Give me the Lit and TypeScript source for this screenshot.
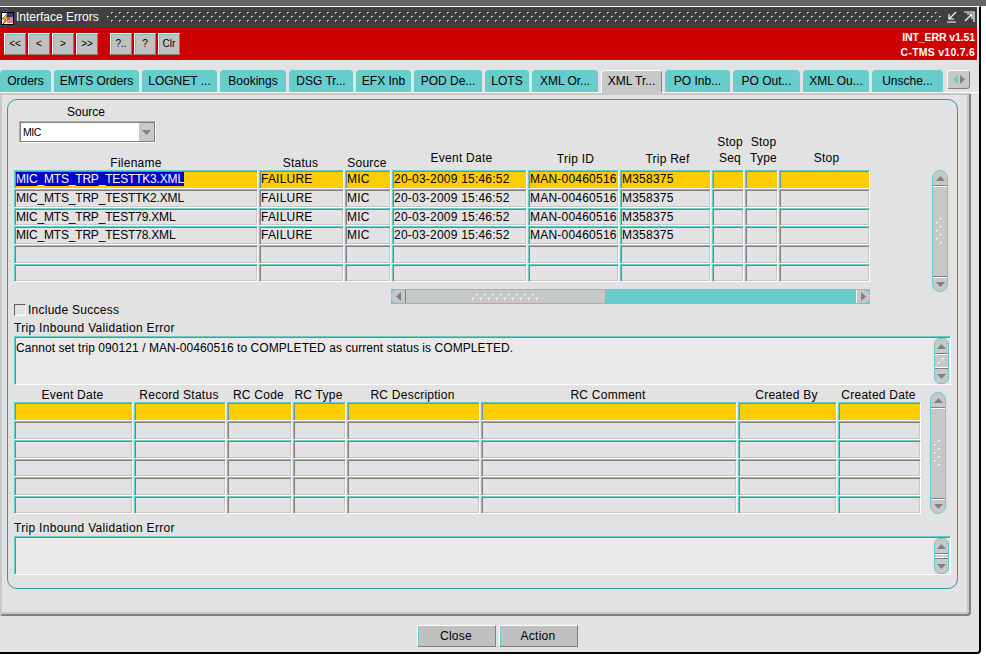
import { LitElement, html, css, svg } from "lit";
import { customElement } from "lit/decorators.js";

const dots = (id: string, w: number, h: number) => html`<svg class="dots" width=${w} height=${h}>
  <defs><pattern id=${id} width="8" height="8" patternUnits="userSpaceOnUse">
    ${svg`<rect x="4" y="1" width="1" height="1" fill="#ffffff"/><rect x="5" y="1" width="1" height="1" fill="#ffffff"/><rect x="4" y="2" width="1" height="1" fill="#ffffff"/><rect x="5" y="2" width="1" height="1" fill="#66cccc"/>
    <rect x="0" y="5" width="1" height="1" fill="#ffffff"/><rect x="1" y="5" width="1" height="1" fill="#ffffff"/><rect x="0" y="6" width="1" height="1" fill="#ffffff"/><rect x="1" y="6" width="1" height="1" fill="#66cccc"/>`}
  </pattern></defs>
  <rect width="100%" height="100%" fill="url(#${id})"/></svg>`;

const titleDots = html`<svg class="dots" width="840" height="12">
  <defs><pattern id="tp" width="8" height="8" patternUnits="userSpaceOnUse">
    ${svg`<rect x="4" y="1" width="2" height="1" fill="#cccccc"/><rect x="4" y="2" width="1" height="1" fill="#66cccc"/><rect x="5" y="2" width="1" height="1" fill="#000"/>
    <rect x="0" y="5" width="2" height="1" fill="#cccccc"/><rect x="0" y="6" width="1" height="1" fill="#66cccc"/><rect x="1" y="6" width="1" height="1" fill="#000"/>`}
  </pattern></defs>
  <rect width="100%" height="100%" fill="url(#tp)"/></svg>`;

const up = html`<svg width="9" height="5" viewBox="0 0 9 5"><path d="M4.5 0 L9 5 L0 5Z" fill="#808080"/></svg>`;
const down = html`<svg width="9" height="5" viewBox="0 0 9 5"><path d="M0 0 L9 0 L4.5 5Z" fill="#808080"/></svg>`;
const left = html`<svg width="5" height="9" viewBox="0 0 5 9"><path d="M5 0 L5 9 L0 4.5Z" fill="#808080"/></svg>`;
const leftT = html`<svg width="5" height="9" viewBox="0 0 5 9"><path d="M5 0 L5 9 L0 4.5Z" fill="#66cccc"/></svg>`;
const right = html`<svg width="5" height="9" viewBox="0 0 5 9"><path d="M0 0 L5 4.5 L0 9Z" fill="#808080"/></svg>`;

const tabs: [string, number][] = [["Orders",51],["EMTS Orders",85],["LOGNET ...",75],["Bookings",66],["DSG Tr...",64],["EFX Inb",55],["POD De...",68],["LOTS",44],["XML Or...",66],["XML Tr...",61],["PO Inb...",65],["PO Out...",67],["XML Ou...",66],["Unsche...",71]];

const upperCols = [244,85,46,135,91,91,32,33,91];
const upperHead: [string, string][] = [["Filename","h1"],["Status","h1 hm"],["Source","h1 hm"],["Event Date","h2 hp"],["Trip ID","h3 hp"],["Trip Ref","h3 hp"],["Stop<br>Seq","h2 hp"],["Stop<br>Type","h2 hp"],["Stop","h2 hp"]];
const f = "FAILURE", m = "MIC", d = "20-03-2009 15:46:52", t = "MAN-00460516", r = "M358375";
const upperRows = [
  ["MIC_MTS_TRP_TESTTK3.XML",f,m,d,t,r,"","",""],
  ["MIC_MTS_TRP_TESTTK2.XML",f,m,d,t,r,"","",""],
  ["MIC_MTS_TRP_TEST79.XML",f,m,d,t,r,"","",""],
  ["MIC_MTS_TRP_TEST78.XML",f,m,d,t,r,"","",""],
  ["","","","","","","","",""],
  ["","","","","","","","",""],
];
const lowerCols = [119,92,65,53,133,256,99,83];
const lowerHead = ["Event Date","Record Status","RC Code","RC Type","RC Description","RC Comment","Created By","Created Date"];

@customElement("app-root")
export class AppRoot extends LitElement {
  static styles = css`
    :host { display: block; width: 986px; height: 658px; background: #fff; font-family: "Liberation Sans", Arial, sans-serif; font-size: 12px; color: #000; overflow: hidden; letter-spacing: 0.25px; }
    * { box-sizing: border-box; }
    .topband { height: 6px; width: 986px; background: #666666; }
    .win { width: 981px; height: 648px; background: #e2e2e2; border-top: 1px solid #fff; border-right: 2px solid #000; border-bottom: 2px solid #000; border-bottom-right-radius: 4px; display: flex; flex-direction: column; }
    .title { height: 20px; margin-right: 2px; background: #404040; display: flex; align-items: center; color: #fff; flex: none; }
    .appicon { width: 15px; height: 18px; margin-left: 0; flex: none; }
    .title .t { margin-left: 1px; white-space: nowrap; font-size: 12px; letter-spacing: 0; }
    .dotwrap { flex: 1; margin: 0 6px 0 8px; height: 12px; overflow: hidden; }
    .dots { display: block; }
    .winbtn { width: 11px; height: 12px; margin-right: 6px; flex: none; display: block; }
    .winbtn.last { margin-right: 2px; }
    .red { height: 33px; margin-right: 2px; background: #cc0000; display: flex; align-items: flex-start; flex: none; padding-top: 6px; padding-left: 4px; }
    .tb { width: 22px; height: 22px; background: #c0c0c0; border: 1px solid; border-color: #fff #808080 #808080 #fff; box-shadow: 1px 1px 0 #66cccc inset; margin-right: 2px; font-size: 10px; display: flex; align-items: center; justify-content: center; padding: 0 0 2px; letter-spacing: 0; }
    .tb.gap { margin-left: 10px; }
    .ver { margin-left: auto; margin-top: -3px; margin-right: 2px; color: #fff; font-weight: bold; font-size: 10.5px; text-align: right; line-height: 15px; letter-spacing: -0.1px; }
    .ver .l2 { letter-spacing: 0.25px; }
    .strip { height: 33px; flex: none; display: flex; align-items: flex-end; border-bottom: 1px solid #fff; }
    .tab { height: 22px; background: #66cccc; margin-right: 3px; flex: none; display: flex; align-items: center; justify-content: center; border-radius: 4px 4px 0 0; white-space: nowrap; padding-bottom: 1px; letter-spacing: 0; }
    .tab.active { background: #c8c8c8; height: 23px; border: 1px solid; border-color: #fff #808080 #c8c8c8 #fff; margin-bottom: -1px; position: relative; z-index: 1; }
    .tabnav { width: 23px; height: 19px; margin: 0 0 3px 1px; background: #c8c8c8; border: 1px solid; border-color: #fff #808080 #808080 #fff; border-radius: 3px; display: flex; align-items: center; justify-content: center; gap: 2px; flex: none; }
    .panel { width: 971px; height: 523px; flex: none; border-top: 2px solid #c8c8c8; border-right: 2px solid #808080; border-bottom: 2px solid #808080; border-left: 2px solid #c8c8c8; border-radius: 0 2px 4px 0; padding: 4px 10px 0 5px; background: #e2e2e2; box-shadow: inset -2px -2px 0 #c8c8c8; }
    .inner { height: 490px; width: 951px; border: 1px solid #339999; border-radius: 10px; padding: 0 0 0 6px; display: flex; flex-direction: column; }
    .srcl { width: 144px; text-align: center; height: 21px; padding-top: 5px; line-height: 14px; letter-spacing: 0; }
    .combo { margin-left: 5px; width: 137px; height: 22px; background: #fff; border: 1px solid; border-color: #66cccc #fff #fff #66cccc; display: flex; flex: none; box-shadow: inset 1px 1px 0 #808080, inset -1px -1px 0 #808080; padding: 1px; }
    .combo .v { flex: 1; padding-left: 2px; line-height: 19px; font-size: 10.5px; letter-spacing: -0.5px; }
    .combo .a { width: 15px; background: #c8c8c8; display: flex; align-items: center; justify-content: center; }
    .upper { display: flex; margin-top: -9px; }
    .gridwrap { flex: none; }
    .grid { display: grid; column-gap: 1px; }
    .uh { height: 36px; }
    .hc { text-align: center; line-height: 16px; align-self: end; white-space: nowrap; }
    .h1 { margin-bottom: -1px; }
    .h2 { padding-bottom: 4px; }
    .h3 { padding-bottom: 3px; }
    .hp { padding-left: 4px; }
    .hm { padding-right: 2px; }
    .row { height: 19px; }
    .row.tight { height: 18px; }
    .cell { height: 100%; background: #e2e2e2; border: 1px solid; border-color: #66cccc #fff #fff #66cccc; box-shadow: inset 1px 1px 0 #808080, inset -1px -1px 0 #c8c8c8; padding: 1px 0 0 1px; line-height: 15px; white-space: nowrap; overflow: hidden; letter-spacing: 0.22px; }
    .row.cur .cell { background: #ffcc00; box-shadow: inset 1px 1px 0 #669999; }
    .cell.fn { letter-spacing: -0.18px; }
    .cell.sel span { background: #0000cc; color: #fff; }
    .vs { width: 16px; flex: none; background: #c8c8c8; border-radius: 8px; border: 1px solid #66cccc; display: flex; flex-direction: column; align-items: center; }
    .vs .cap { height: 15px; flex: none; width: 100%; display: flex; align-items: center; justify-content: center; }
    .vs .cap.t { border-bottom: 1px solid #808080; box-shadow: 0 1px 0 #fff; }
    .vs .cap.b { border-top: 1px solid #808080; box-shadow: inset 0 1px 0 #fff; }
    .vs .mid { flex: 1; display: flex; align-items: center; justify-content: center; }
    .vs1 { margin: 36px 0 -10px 62px; height: 122px; align-self: flex-start; }
    .vs2 { margin-left: 9px; height: 122px; align-self: flex-end; }
    .hs { margin-left: 377px; width: 479px; height: 15px; margin-top: 7px; background: #66cccc; display: flex; align-items: center; padding: 1px 0; flex: none; }
    .hs .lc { width: 15px; height: 13px; background: #c8c8c8; border-radius: 6px 0 0 6px; border-right: 1px solid #808080; display: flex; align-items: center; justify-content: center; }
    .hs .th { width: 199px; height: 13px; background: #c8c8c8; display: flex; align-items: center; justify-content: center; }
    .hs .sp { flex: 1; }
    .hs .rc { width: 14px; height: 13px; background: #c8c8c8; border-radius: 0 6px 6px 0; border-left: 1px solid #fff; display: flex; align-items: center; justify-content: center; }
    .chk { display: flex; align-items: center; height: 14px; margin-top: -1px; flex: none; line-height: 14px; }
    .chk i { display: block; width: 12px; height: 12px; background: #e2e2e2; border: 1px solid; border-color: #606060 #fff #fff #606060; margin-right: 2px; }
    .lab { height: 14px; line-height: 14px; margin-top: 4px; flex: none; letter-spacing: 0.3px; }
    .lab.l2 { margin-top: 7px; }
    .ta { width: 937px; background: #e9e9e9; flex: none; display: flex; border: 1px solid; border-color: #66cccc #fff #fff #66cccc; box-shadow: inset 1px 1px 0 #808080; margin-top: 1px; }
    .ta .txt { flex: 1; padding: 4px 0 0 1px; line-height: 15px; white-space: nowrap; letter-spacing: 0.06px; }
    .ta1 { height: 49px; }
    .ta2 { height: 39px; }
    .tas { width: 15px; background: #c8c8c8; border: 1px solid #66cccc; border-radius: 6px; display: flex; flex-direction: column; flex: none; margin: 1px 1px 0 0; }
    .tas .c { height: 14px; flex: none; display: flex; align-items: center; justify-content: center; }
    .tas .m { flex: 1; border-top: 1px solid #808080; border-bottom: 1px solid #808080; box-shadow: inset 0 1px 0 #fff, inset 0 -1px 0 #fff; display: flex; align-items: center; justify-content: center; }
    .lower { display: flex; margin-top: 2px; }
    .lh { height: 15px; }
    .lh .hc { line-height: 16px; padding-right: 2px; }
    .foot { flex: 1; display: flex; justify-content: center; align-items: flex-start; gap: 3px; padding: 9px 0 0 15px; }
    .fb { width: 79px; height: 22px; background: #c0c0c0; border: 1px solid; border-color: #fff #808080 #808080 #fff; box-shadow: 1px 0 0 #66cccc inset; display: flex; align-items: center; justify-content: center; }
  `;

  private vs(cls: string) {
    return html`<div class="vs ${cls}"><div class="cap t">${up}</div><div class="mid">${dots("v" + cls, 8, 28)}</div><div class="cap b">${down}</div></div>`;
  }

  render() {
    const uc = upperCols.map((w) => w + "px").join(" ");
    const lc = lowerCols.map((w) => w + "px").join(" ");
    return html`
      <div class="topband"></div>
      <div class="win">
        <div class="title">
          <svg class="appicon" viewBox="0 0 15 18">
            <path d="M2 1h1v1H2zM5 0h1v1H5zM7 1h1v1H7zM3 3h1v1H3zM6 3h1v1H6z" fill="#6a7ad0"/>
            <rect x="1.5" y="4.5" width="12" height="12" fill="#fff" stroke="#000"/>
            <rect x="7" y="5" width="6" height="4" fill="#2233aa"/>
            <path d="M7 10h6M7 12h6M7 14h6" stroke="#cc0000"/>
            <path d="M8 5 L2 11 L5.5 11 L3 16 L9.5 10 L6.5 10 Z" fill="#ffcc00" stroke="#000" stroke-width=".5"/>
          </svg>
          <span class="t">Interface Errors</span>
          <div class="dotwrap">${titleDots}</div>
          <svg class="winbtn" viewBox="0 0 11 12"><path d="M0 11H9M9 1L2 8M2 3V8H7" stroke="#fff" fill="none" stroke-width="1.2"/></svg>
          <svg class="winbtn last" viewBox="0 0 11 12"><path d="M0 1H10V11M1 10L8 3M3 3H8V8" stroke="#fff" fill="none" stroke-width="1.2"/></svg>
        </div>
        <div class="red">
          <div class="tb">&lt;&lt;</div><div class="tb">&lt;</div><div class="tb">&gt;</div><div class="tb">&gt;&gt;</div>
          <div class="tb gap">?..</div><div class="tb">?</div><div class="tb">Clr</div>
          <div class="ver"><div>INT_ERR v1.51</div><div class="l2">C-TMS v10.7.6</div></div>
        </div>
        <div class="strip">
          ${tabs.map(([t, w], i) => html`<div class=${i === 9 ? "tab active" : "tab"} style="width:${w}px">${t}</div>`)}
          <div class="tabnav">${leftT}${right}</div>
        </div>
        <div class="panel">
          <div class="inner">
            <div class="srcl">Source</div>
            <div class="combo"><div class="v">MIC</div><div class="a">${down}</div></div>
            <div class="upper">
              <div class="gridwrap">
                <div class="grid uh" style="grid-template-columns:${uc}">
                  ${upperHead.map(([t, c]) => html`<div class="hc ${c}" .innerHTML=${t}></div>`)}
                </div>
                ${upperRows.map((r, i) => html`<div class="grid row ${i === 0 ? "cur" : ""} ${i === 2 || i === 5 ? "tight" : ""}" style="grid-template-columns:${uc}">
                  ${r.map((c, j) => html`<div class="cell ${j === 0 ? "fn" : ""} ${i === 0 && j === 0 ? "sel" : ""}"><span>${c}</span></div>`)}
                </div>`)}
              </div>
              ${this.vs("vs1")}
            </div>
            <div class="hs"><div class="lc">${left}</div><div class="th">${dots("hg", 68, 8)}</div><div class="sp"></div><div class="rc">${right}</div></div>
            <div class="chk"><i></i>Include Success</div>
            <div class="lab">Trip Inbound Validation Error</div>
            <div class="ta ta1"><div class="txt">Cannot set trip 090121 / MAN-00460516 to COMPLETED as current status is COMPLETED.</div>
              <div class="tas"><div class="c">${up}</div><div class="m">${dots("a1", 8, 8)}</div><div class="c">${down}</div></div></div>
            <div class="lower">
              <div class="gridwrap">
                <div class="grid lh" style="grid-template-columns:${lc}">${lowerHead.map((t) => html`<div class="hc">${t}</div>`)}</div>
                ${[0, 1, 2, 3, 4, 5].map((i) => html`<div class="grid row ${i === 0 ? "cur" : ""} ${i === 3 || i === 5 ? "tight" : ""}" style="grid-template-columns:${lc}">${lowerCols.map(() => html`<div class="cell"></div>`)}</div>`)}
              </div>
              ${this.vs("vs2")}
            </div>
            <div class="lab l2">Trip Inbound Validation Error</div>
            <div class="ta ta2"><div class="txt"></div>
              <div class="tas"><div class="c">${up}</div><div class="m">${dots("a2", 6, 3)}</div><div class="c">${down}</div></div></div>
          </div>
        </div>
        <div class="foot"><div class="fb">Close</div><div class="fb">Action</div></div>
      </div>
    `;
  }
}
